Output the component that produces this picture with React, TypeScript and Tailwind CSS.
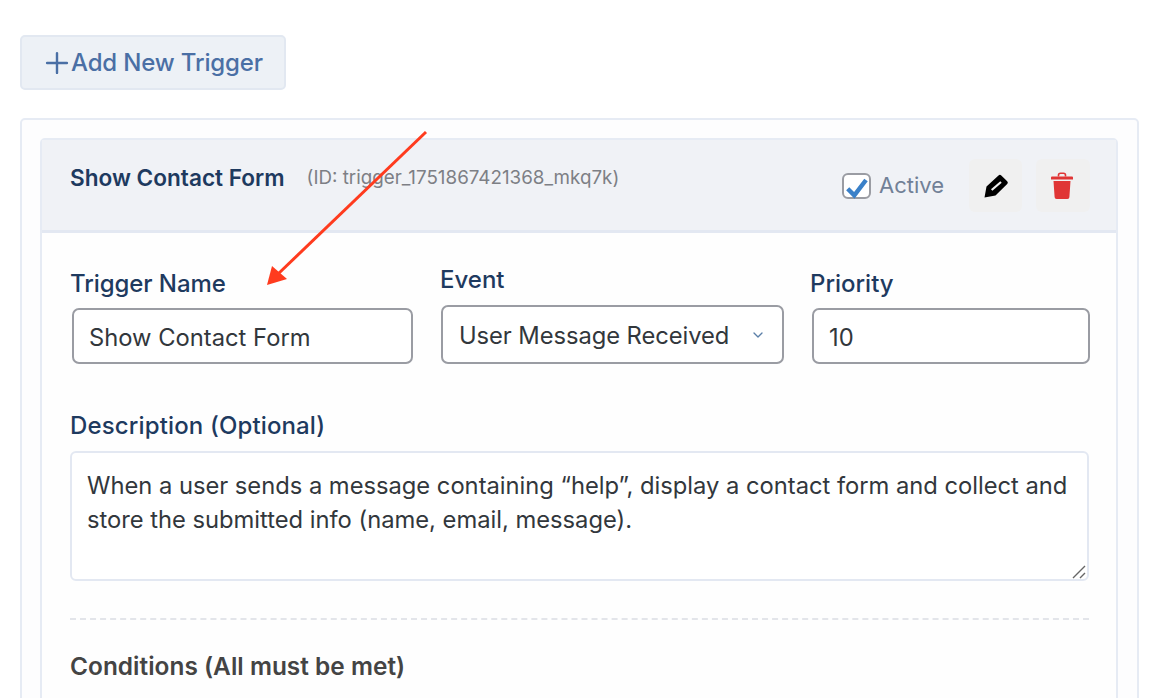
import React from 'react';
import { ChevronDown, Plus } from 'lucide-react';

const labelClass = 'block text-[24px] font-medium leading-[30px] text-[#1e3a5f]';
const fieldClass = 'border-2 border-[#9a9ca3] bg-white pt-[3px] text-[23.75px] text-[#32373c]';

const App = () => {
  return (
    <div className="relative h-[698px] w-[1154px] overflow-hidden bg-white font-['Inter',sans-serif]">
      <main className="pl-5 pt-[35px] pr-[15px]">
        <button className="flex h-[55px] w-[266px] items-center rounded-[5px] border-2 border-[#e2e8f1] bg-[#edf1f6] pl-[18px] text-[24px] font-medium tracking-[-0.15px] text-[#4a6fa5]">
          <Plus className="-mr-[3px] h-[34px] w-[34px] shrink-0" strokeWidth={1.7} />
          <span>Add New Trigger</span>
        </button>

        <section className="mt-7 h-[700px] rounded-[5px] border-2 border-[#e6ebf4] bg-[#fdfdfe] pl-[18px] pr-[19px] pt-[18px]">
          <div className="h-[700px] rounded-[5px] border-2 border-[#e6ebf4] bg-[#fefefe]">
            {/* trigger header */}
            <div className="flex h-[93px] items-start justify-between border-b-[3px] border-[#e3e8f2] bg-[#f0f2f6] pl-[28px] pr-[26px] pt-[19px]">
              <div className="flex items-center gap-[22px]">
                <h3 className="text-[22.6px] font-semibold leading-[38px] text-[#1e3a5f]">Show Contact Form</h3>
                <span className="text-[18.8px] text-[#7d7f85]">(ID: trigger_1751867421368_mkq7k)</span>
              </div>
              <div className="flex items-center">
                <span className="relative h-[26px] w-[29px] rounded-[6px] border-2 border-[#9a9ca3] bg-white">
                  <svg className="absolute -left-[2px] -top-[2px]" width="29" height="26" viewBox="0 0 29 26">
                    <path d="M5.7 15.7 12.3 22.3 24 7" stroke="#3a80c8" strokeWidth="4.4" fill="none" />
                  </svg>
                </span>
                <span className="ml-[8px] w-[64px] text-[22px] text-[#718096]">Active</span>
                <button className="ml-[26px] flex h-[53px] w-[53px] items-center justify-center rounded-[6px] bg-[#f0f0f0]">
                  <svg width="26" height="26" viewBox="0 0 26 26">
                    <path d="M1.5 24.5 3.5 13.5 15.5 2.5a2 2 0 0 1 2.8 0l5.9 5.7a2 2 0 0 1 0 2.8L12.5 22.5Z" fill="#000" />
                    <path d="M8.7 17 18 9" stroke="#f0f0f0" strokeWidth="2.2" fill="none" />
                  </svg>
                </button>
                <button className="ml-[14px] flex h-[53px] w-[54px] items-center justify-center rounded-[6px] bg-[#f0f0f0]">
                  <svg className="mr-[2px]" width="22" height="27" viewBox="0 0 22 27">
                    <path d="M7.5 4.5V3.2A2 2 0 0 1 9.5 1.2h3a2 2 0 0 1 2 2v1.3" stroke="#e03535" strokeWidth="1.6" fill="none" />
                    <path d="M1 4.5h20a1 1 0 0 1 1 1V7.5H0V5.5a1 1 0 0 1 1-1Z" fill="#e03535" />
                    <path d="M2.5 9h17L18.4 25a2 2 0 0 1-2 2H5.6a2 2 0 0 1-2-2Z" fill="#e03535" />
                  </svg>
                </button>
              </div>
            </div>

            {/* form body */}
            <div className="px-[28px]">
              <div className="ml-[2px] grid h-[131px] grid-cols-[341px_343px_278px] items-end gap-x-[28px]">
                <div>
                  <label className={`-ml-[2px] tracking-[-0.08px] ${labelClass}`}>Trigger Name</label>
                  <input readOnly value="Show Contact Form" className={`mt-[9px] h-[56px] w-full rounded-[7px] px-[15px] outline-none ${fieldClass}`} />
                </div>
                <div>
                  <label className={`-ml-px ${labelClass}`}>Event</label>
                  <div className={`mt-[10px] flex h-[59px] items-center justify-between rounded-[7px] px-[16px] tracking-[-0.07px] ${fieldClass}`}>
                    <span>User Message Received</span>
                    <ChevronDown className="-mt-[3px] h-[16px] w-[16px] text-[#5b7fa8]" strokeWidth={2} />
                  </div>
                </div>
                <div>
                  <label className={`-ml-[2px] ${labelClass}`}>Priority</label>
                  <input readOnly value="10" className={`mt-[9px] h-[56px] w-full rounded-[7px] px-[15px] outline-none ${fieldClass}`} />
                </div>
              </div>

              <label className={`mt-[47px] tracking-[0.14px] ${labelClass}`}>Description (Optional)</label>
              <div className="relative mt-[10px] h-[130px] w-[1019px]">
                <textarea
                  readOnly
                  value={'When a user sends a message containing “help”, display a contact form and collect and store the submitted info (name, email, message).'}
                  className="block h-[130px] w-full resize-none rounded-[6px] border-2 border-[#e3e8f2] bg-white px-[15px] py-[16px] text-[23.75px] leading-[34px] tracking-[-0.02px] text-[#32373c] outline-none"
                />
                {/* resize grip */}
                <svg className="absolute bottom-[2px] right-[3px]" width="14" height="14" viewBox="0 0 14 14">
                  <path d="M1 13 13 1M8 13l5-5" stroke="#666" strokeWidth="1.4" fill="none" />
                </svg>
              </div>

              <div className="mt-[37px] w-[1019px] border-t-2 border-dashed border-[#e3e5ea]" />
              <h4 className="mt-[31px] text-[24.4px] font-semibold leading-[30px] tracking-[0.03px] text-[#444]">Conditions (All must be met)</h4>
            </div>
          </div>
        </section>
      </main>

      {/* annotation arrow */}
      <svg className="pointer-events-none absolute left-0 top-0" width="1154" height="698">
        <line x1="426" y1="132" x2="278" y2="274" stroke="#ff3b1e" strokeWidth="3" />
        <polygon points="267,285 272,266 287,279" fill="#ff3b1e" />
      </svg>
    </div>
  );
};

export default App;
